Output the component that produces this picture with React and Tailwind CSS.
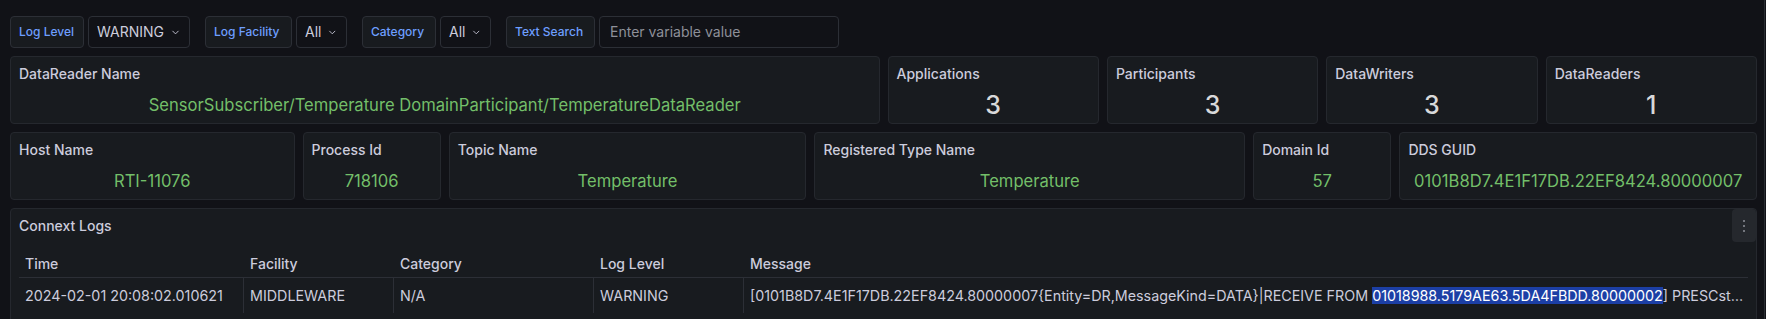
import React from 'react';
import { ChevronDown } from 'lucide-react';

function VarLabel({ children, w }) {
  return (
    <div className={`flex h-8 shrink-0 items-center whitespace-nowrap rounded-sm border border-[#2c2f36] bg-[#181b1f] px-2 text-xs font-medium text-[#6e9fff] ${w}`}>
      {children}
    </div>
  );
}

function VarSelect({ value, w }) {
  return (
    <div className={`flex h-8 shrink-0 items-center gap-1.5 whitespace-nowrap rounded-sm border border-[#2c2f36] bg-[#111217] px-2 text-sm text-[#ccccdc] ${w}`}>
      <span>{value}</span>
      <ChevronDown size={11} strokeWidth={2} className="text-[#ccccdc]" />
    </div>
  );
}

function Panel({ title, value, kind, span }) {
  return (
    <div className={`flex h-[68px] min-w-0 flex-col overflow-hidden rounded-sm border border-[#25282e] bg-[#181b1f] ${span}`}>
      <div className="truncate px-2 pt-2 text-sm font-medium leading-[18px] text-[#ccccdc]">{title}</div>
      <div className="flex flex-1 items-center justify-center pt-1">
        {kind === 'stat' ? (
          <span className="text-[25px] leading-none font-medium text-[#d8d9da]">{value}</span>
        ) : (
          <span className="whitespace-nowrap text-[16.6px] leading-none text-[#73bf69]">{value}</span>
        )}
      </div>
    </div>
  );
}

function Cell({ children, w, first, className = '' }) {
  return (
    <div className={`flex h-full items-center whitespace-nowrap pl-1.5 ${first ? '' : 'border-l border-[#2c2f36]'} ${w} ${className}`}>
      {children}
    </div>
  );
}

export default function App() {
  return (
    <div className="flex h-[319px] w-full overflow-hidden bg-[#111217] font-['Inter','Noto_Sans',sans-serif]">
      <div className="flex min-w-0 flex-1 flex-col">
        <div className="h-[3px] bg-[#0c0d10]" />
        <div className="flex min-w-0 flex-col gap-2 pl-[10px] pr-[7px] pt-[16px]">
          {/* variables */}
          <div className="flex items-center gap-[15px]">
            <div className="flex gap-1">
              <VarLabel w="w-[74px]">Log Level</VarLabel>
              <VarSelect value="WARNING" w="w-[102px]" />
            </div>
            <div className="flex gap-1">
              <VarLabel w="w-[87px]">Log Facility</VarLabel>
              <VarSelect value="All" w="w-[51px]" />
            </div>
            <div className="flex gap-1">
              <VarLabel w="w-[74px]">Category</VarLabel>
              <VarSelect value="All" w="w-[51px]" />
            </div>
            <div className="flex gap-1">
              <VarLabel w="w-[89px]">Text Search</VarLabel>
              <div className="flex h-8 w-[240px] items-center rounded-sm border border-[#2c2f36] bg-[#111217] px-2.5 text-sm text-[#8e9099]">
                Enter variable value
              </div>
            </div>
          </div>

          {/* stat panels */}
          <div className="grid min-w-0 grid-cols-[repeat(24,minmax(0,1fr))] gap-2">
            <Panel span="col-span-12" title="DataReader Name" value="SensorSubscriber/Temperature DomainParticipant/TemperatureDataReader" />
            <Panel span="col-span-3" kind="stat" title="Applications" value="3" />
            <Panel span="col-span-3" kind="stat" title="Participants" value="3" />
            <Panel span="col-span-3" kind="stat" title="DataWriters" value="3" />
            <Panel span="col-span-3" kind="stat" title="DataReaders" value="1" />

            <Panel span="col-span-4" title="Host Name" value="RTI-11076" />
            <Panel span="col-span-2" title="Process Id" value="718106" />
            <Panel span="col-span-5" title="Topic Name" value="Temperature" />
            <Panel span="col-span-6" title="Registered Type Name" value="Temperature" />
            <Panel span="col-span-2" title="Domain Id" value="57" />
            <Panel span="col-span-5" title="DDS GUID" value="0101B8D7.4E1F17DB.22EF8424.80000007" />
          </div>

          {/* logs */}
          <div className="relative h-[200px] min-w-0 rounded-sm border border-[#25282e] bg-[#181b1f]">
            <div className="px-2 pt-2 text-sm font-medium leading-[18px] text-[#ccccdc]">Connext Logs</div>
            <button className="absolute right-0 top-0 flex h-[33px] w-6 flex-col items-center justify-center gap-[3px] rounded-sm bg-[#25282d]">
              <span className="h-[2px] w-[2px] rounded-full bg-[#8e9099]" />
              <span className="h-[2px] w-[2px] rounded-full bg-[#8e9099]" />
              <span className="h-[2px] w-[2px] rounded-full bg-[#8e9099]" />
            </button>
            <div className="mx-2 mt-[15px] text-[14.3px] text-[#ccccdc]">
              <div className="flex h-7 items-center border-b border-[#2c2f36] text-sm font-medium">
                <div className="w-[224px] shrink-0 pl-1.5">Time</div>
                <div className="w-[150px] shrink-0 pl-[7px]">Facility</div>
                <div className="w-[200px] shrink-0 pl-[7px]">Category</div>
                <div className="w-[150px] shrink-0 pl-[7px]">Log Level</div>
                <div className="flex-1 pl-[7px]">Message</div>
              </div>
              <div className="flex h-[35px] items-stretch">
                <Cell first w="w-[224px] shrink-0">2024-02-01 20:08:02.010621</Cell>
                <Cell w="w-[150px] shrink-0">MIDDLEWARE</Cell>
                <Cell w="w-[200px] shrink-0">N/A</Cell>
                <Cell w="w-[150px] shrink-0">WARNING</Cell>
                <Cell w="min-w-0 flex-1" className="pr-1">
                  <span className="min-w-0 truncate">
                    [0101B8D7.4E1F17DB.22EF8424.80000007{'{'}Entity=DR,MessageKind=DATA{'}'}|RECEIVE FROM{' '}
                    <span className="bg-[#1c3fa5] text-white">01018988.5179AE63.5DA4FBDD.80000002</span>
                    ] PRESCstatus: receiving sample from unknown remote writer
                  </span>
                </Cell>
              </div>
            </div>
          </div>
        </div>
      </div>
      <div className="w-px bg-[#2a2d33]" />
      <div className="w-px" />
    </div>
  );
}
